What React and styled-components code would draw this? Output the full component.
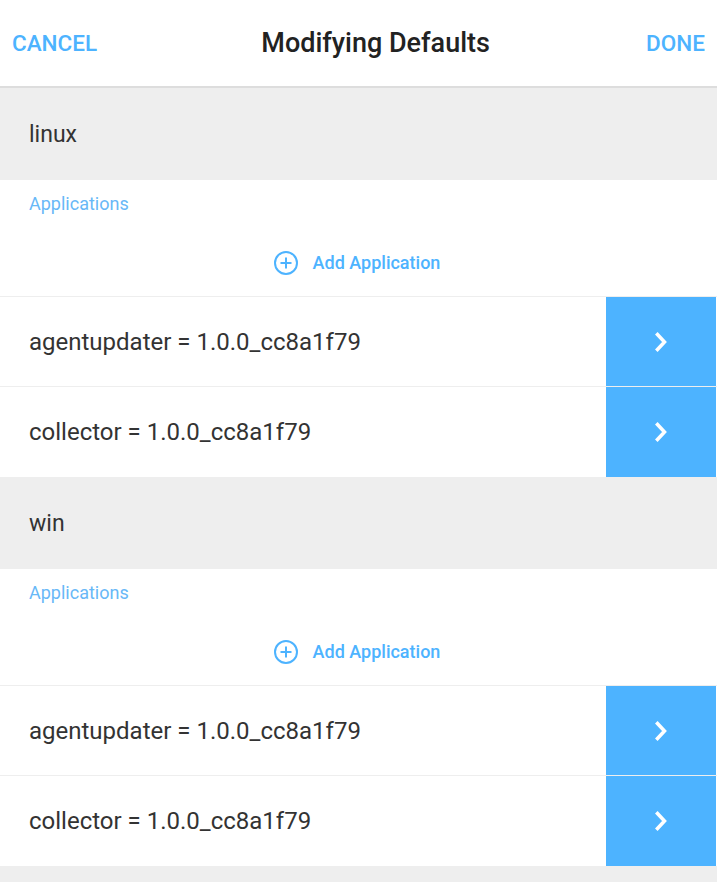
import React from 'react';
import styled, { createGlobalStyle } from 'styled-components';

const Global = createGlobalStyle`
  body { margin: 0; font-family: Roboto, "Noto Sans", sans-serif; background: #fff; }
`;

const groups = [
  { name: 'linux', apps: ['agentupdater = 1.0.0_cc8a1f79', 'collector = 1.0.0_cc8a1f79'] },
  { name: 'win', apps: ['agentupdater = 1.0.0_cc8a1f79', 'collector = 1.0.0_cc8a1f79'] },
];

const App = () => (
  <Page>
    <Global />
    <Header>
      <HeaderButton>CANCEL</HeaderButton>
      <Title>Modifying Defaults</Title>
      <HeaderButton>DONE</HeaderButton>
    </Header>
    {groups.map(g => (
      <div key={g.name}>
        <GroupHeader>{g.name}</GroupHeader>
        <SectionLabel>Applications</SectionLabel>
        <AddRow>
          <svg width="26" height="26" viewBox="0 0 26 26" fill="none" stroke="#4db3ff" strokeWidth="2">
            <circle cx="13" cy="13" r="11" />
            <path d="M13 7.5v11M7.5 13h11" />
          </svg>
          Add Application
        </AddRow>
        {g.apps.map(a => (
          <AppRow key={a}>
            <AppName>{a}</AppName>
            <Chevron>
              <svg width="24" height="24" viewBox="0 0 24 24" fill="none" stroke="#fff" strokeWidth="3.5" strokeLinecap="square">
                <path d="M8.5 4.5l7 7.5-7 7.5" />
              </svg>
            </Chevron>
          </AppRow>
        ))}
      </div>
    ))}
    <Footer />
  </Page>
);

const Page = styled.div`
  width: 717px;
  min-height: 882px;
  display: flex;
  flex-direction: column;
`;

const Header = styled.div`
  height: 86px;
  display: flex;
  align-items: center;
  justify-content: space-between;
  padding: 0 12px;
  border-bottom: 2px solid #ddd;
  box-sizing: content-box;
`;

const HeaderButton = styled.span`
  color: #4db3ff;
  font-size: 22.5px;
  font-weight: 500;
`;

const Title = styled.span`
  color: #222;
  font-size: 27px;
  font-weight: 500;
  margin-left: 8px;
`;

const GroupHeader = styled.div`
  height: 92px;
  background: #eeeeee;
  display: flex;
  align-items: center;
  padding-left: 29px;
  font-size: 23px;
  color: #333;
`;

const SectionLabel = styled.div`
  height: 33px;
  padding: 13px 0 0 29px;
  box-sizing: border-box;
  font-size: 18px;
  color: #68b8f7;
`;

const AddRow = styled.div`
  height: 84px;
  padding-top: 16px;
  padding-right: 4px;
  display: flex;
  align-items: center;
  justify-content: center;
  gap: 14px;
  color: #4db3ff;
  font-size: 18px;
  font-weight: 500;
  border-bottom: 1px solid #eee;
  box-sizing: border-box;
`;

const AppRow = styled.div`
  height: 90px;
  display: flex;
  align-items: stretch;
  border-bottom: 1px solid #eee;
  box-sizing: border-box;
  &:last-child { border-bottom: none; }
`;

const AppName = styled.div`
  flex: 1;
  display: flex;
  align-items: center;
  padding-left: 29px;
  font-size: 24px;
  color: #333;
`;

const Chevron = styled.div`
  width: 110px;
  margin-right: 1px;
  background: #4db3ff;
  display: flex;
  align-items: center;
  justify-content: center;
`;

const Footer = styled.div`
  flex: 1;
  background: #eeeeee;
`;

export default App;
